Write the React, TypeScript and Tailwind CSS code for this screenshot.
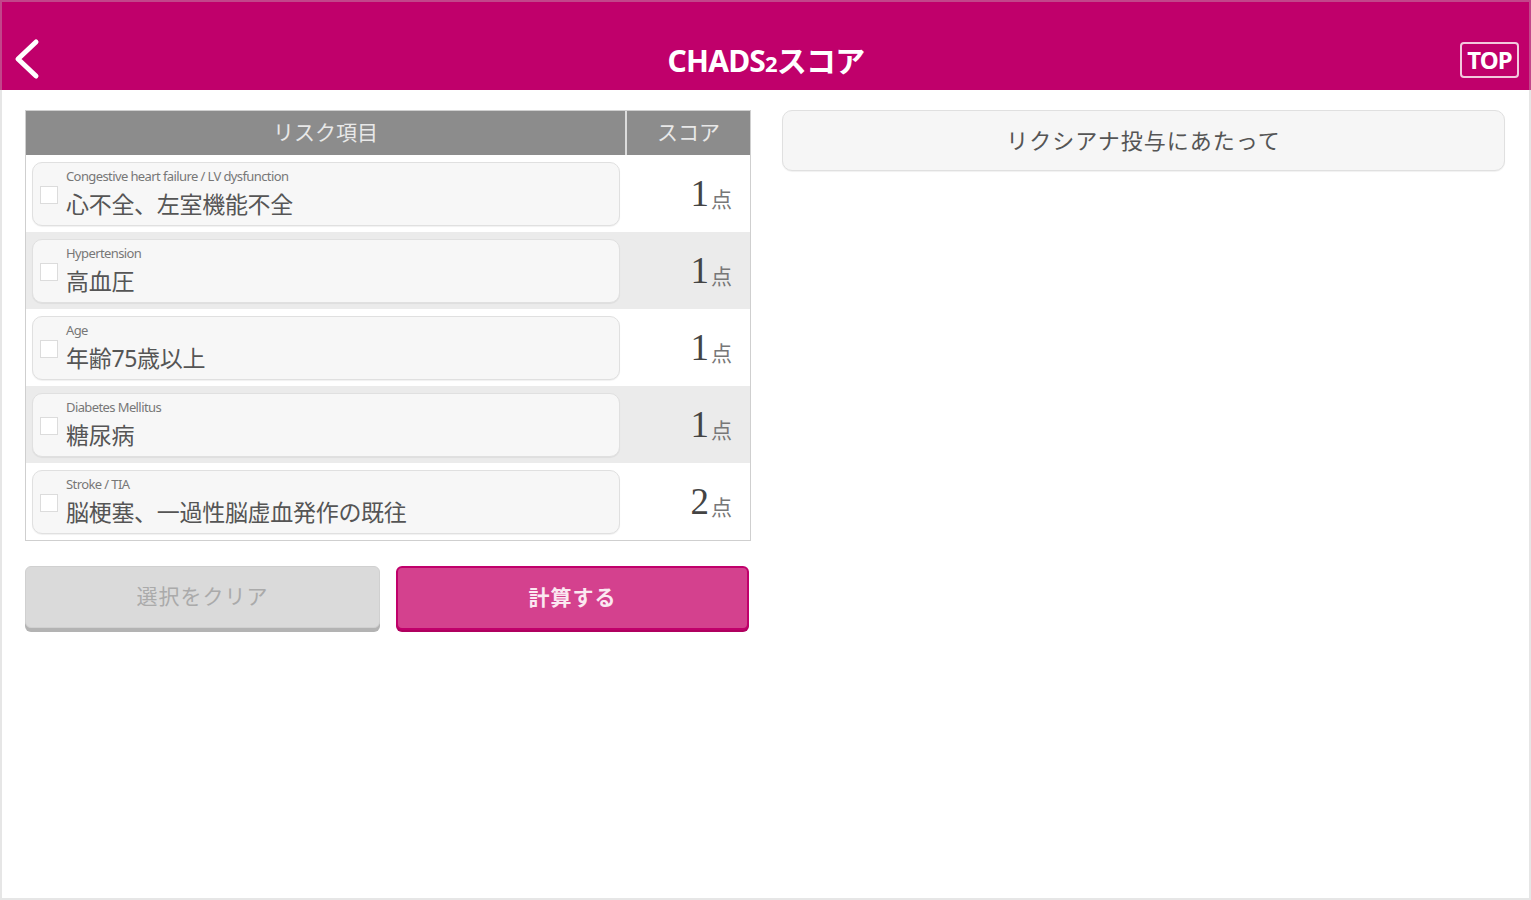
import React from "react";

const rows = [
  { en: "Congestive heart failure / LV dysfunction", ja: "心不全、左室機能不全", score: "1" },
  { en: "Hypertension", ja: "高血圧", score: "1" },
  { en: "Age", ja: "年齢75歳以上", score: "1" },
  { en: "Diabetes Mellitus", ja: "糖尿病", score: "1" },
  { en: "Stroke / TIA", ja: "脳梗塞、一過性脳虚血発作の既往", score: "2" },
];

const font = { fontFamily: '"Noto Sans", "Noto Sans CJK JP", sans-serif' };

export default function App() {
  return (
    <div className="w-[1531px] h-[900px] flex flex-col bg-white overflow-hidden" style={font}>
      <header className="h-[90px] shrink-0 bg-[#c0006b] border-t-2 border-x-2 border-[#c2468a] flex items-center justify-between pl-[10px] pr-[10px]">
        <svg width="30" height="42" viewBox="0 0 30 42" className="mt-[26px]">
          <path d="M24 4 L6 21 L24 38" fill="none" stroke="white" strokeWidth="5" strokeLinecap="round" strokeLinejoin="round" />
        </svg>
        <h1 className="text-white text-[30px] font-bold tracking-[-0.8px] mt-[28px] ml-[30px]">
          CHADS<span className="text-[22px]">2</span>スコア
        </h1>
        <div className="mt-[28px] w-[59px] h-[36px] border-2 border-[#f3c9dd] rounded-[4px] flex items-center justify-center text-white font-bold text-[24px] tracking-[-1px]">
          TOP
        </div>
      </header>
      <main className="flex-1 border-x-2 border-b-2 border-[#e6e6e6] flex gap-[31px] pl-[23px] pr-[23px] pt-[20px]">
        <div className="w-[726px] flex flex-col">
          <div className="border border-[#cfcfcf] flex flex-col">
            <div className="flex h-[44px] bg-[#8c8c8c] text-[#e8e8e8] text-[21px]">
              <div className="w-[601px] flex items-center justify-center border-r-2 border-[#dcdcdc]">リスク項目</div>
              <div className="flex-1 flex items-center justify-center">スコア</div>
            </div>
            {rows.map((r, i) => (
              <div key={i} className={`flex h-[77px] items-center ${i % 2 === 1 ? "bg-[#ebebeb]" : "bg-white"}`}>
                <div className="w-[601px] pl-[6px] pr-[6px]">
                  <div className="h-[64px] w-[588px] rounded-[10px] border border-[#e0e0e0] bg-[#f7f7f7] shadow-[0_1px_1px_rgba(0,0,0,0.06)] flex items-center pl-[7px]">
                    <div className="w-[18px] h-[18px] bg-white border border-[#dcdcdc] mr-[8px] mt-[2px]" />
                    <div className="flex flex-col gap-[5px]">
                      <span className="text-[13px] leading-[16px] text-[#777] tracking-[-0.6px]">{r.en}</span>
                      <span className="text-[23px] leading-[30px] text-[#555] tracking-[-0.3px]">{r.ja}</span>
                    </div>
                  </div>
                </div>
                <div className="flex-1 flex items-end justify-end pr-[18px] text-[#444]">
                  <span className="text-[37px] leading-[40px] mr-[2px]" style={{ fontFamily: '"Liberation Serif", serif' }}>{r.score}</span>
                  <span className="text-[21px] leading-[29px] text-[#777]">点</span>
                </div>
              </div>
            ))}
          </div>
          <div className="flex gap-[16px] mt-[25px]">
            <button className="w-[355px] h-[62px] rounded-[6px] bg-[#dadada] border border-[#d0d0d0] shadow-[0_4px_0_#b3b3b3] text-[#aaa] text-[21px] tracking-[1px] flex items-center justify-center">
              選択をクリア
            </button>
            <button className="w-[353px] h-[64px] rounded-[6px] bg-[#d4418e] border-2 border-[#c0006b] shadow-[0_2px_0_#b0005f] text-[#fbe8f1] text-[21px] font-bold tracking-[1px] flex items-center justify-center">
              計算する
            </button>
          </div>
        </div>
        <div className="flex-1 pr-[1px]">
          <div className="h-[61px] rounded-[10px] border border-[#e0e0e0] bg-[#f6f6f6] shadow-[0_1px_1px_rgba(0,0,0,0.06)] flex items-center justify-center text-[#555] text-[22px] tracking-[1px]">
            リクシアナ投与にあたって
          </div>
        </div>
      </main>
    </div>
  );
}
